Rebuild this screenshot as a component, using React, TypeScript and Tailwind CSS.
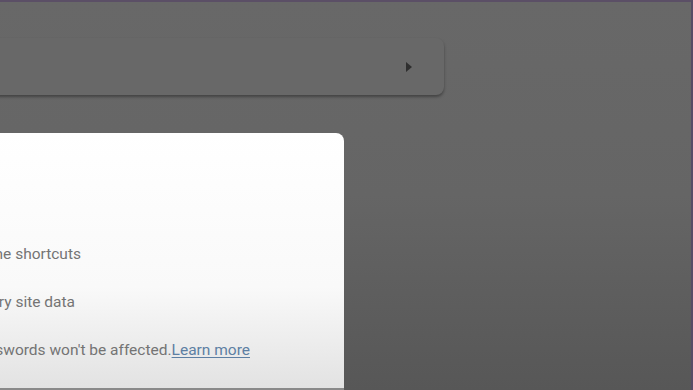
export default function App() {
  return (
    <div className="relative flex h-[390px] w-[693px] flex-col overflow-hidden border-t-2 border-r-2 border-t-[#5b4f66] border-r-[#574c66] bg-gradient-to-b from-[#686868] via-[#656565] to-[#575757] font-['Roboto',sans-serif]">
      {/* Background settings row */}
      <div className="mt-[36px] -ml-3 flex h-[57px] w-[456px] items-center justify-end rounded-lg bg-[#686868] pr-[32px] shadow-[0_2px_3px_rgba(0,0,0,0.35)]">
        <svg width="6" height="10" viewBox="0 0 6 10">
          <path d="M0 0 L6 5 L0 10 Z" fill="#2f2f2f" />
        </svg>
      </div>

      {/* Dialog */}
      <div className="mt-[38px] flex w-[344px] flex-1 flex-col rounded-tr-lg bg-gradient-to-b from-white via-[#f9f9f9] via-60% to-[#e2e2e2] pt-[111px] text-[15.5px] leading-[20px] text-[#747474]">
        <div className="flex w-[81px] justify-end overflow-hidden whitespace-nowrap">
          <span>Reset startup page, new tab page, search engine and the shortcuts</span>
        </div>
        <div className="mt-[28px] flex w-[75px] justify-end overflow-hidden whitespace-nowrap">
          <span>Disable extensions and clear temporary site data</span>
        </div>
        <div className="mt-[28px] flex w-[250px] justify-end overflow-hidden whitespace-nowrap">
          <span>
            Bookmarks, history and saved passwords won't be affected.
            <a href="#" className="text-[#5d7fa3] underline underline-offset-2">Learn more</a>
          </span>
        </div>
        <div className="mt-auto h-[2px] w-full bg-[#8a8a8a]" />
      </div>
    </div>
  )
}
